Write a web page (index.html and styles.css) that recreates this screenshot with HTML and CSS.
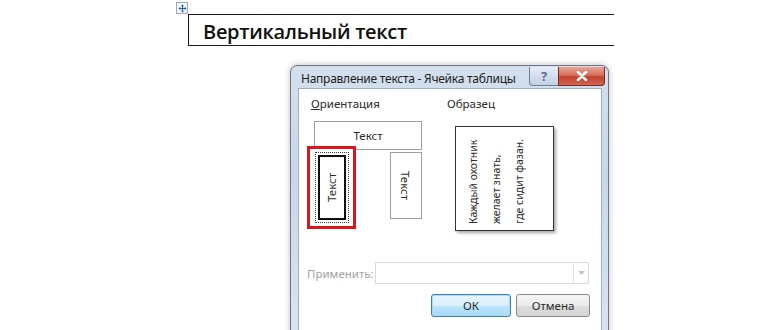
FILE: index.html
```html
<!DOCTYPE html>
<html lang="ru">
<head>
    <meta charset="UTF-8">
    <title>Вертикальный текст</title>
    <link rel="stylesheet" href="styles.css">
</head>
<body>
    <div class="doc">
        <div class="table-cell">
            <span class="move-handle">
                <svg width="9" height="9" viewBox="0 0 9 9">
                    <path d="M4.5 0.5 L2.8 2.3 H4 V4 H2.3 V2.8 L0.5 4.5 L2.3 6.2 V5 H4 V6.7 H2.8 L4.5 8.5 L6.2 6.7 H5 V5 H6.7 V6.2 L8.5 4.5 L6.7 2.8 V4 H5 V2.3 H6.2 Z" fill="#2a5ea8"/>
                </svg>
            </span>
            <div class="cell-text">Вертикальный текст</div>
        </div>

        <div class="dialog">
            <div class="titlebar">
                <span class="title">Направление текста - Ячейка таблицы</span>
                <div class="caption-buttons">
                    <span class="cap-btn help">?</span>
                    <span class="cap-btn close">
                        <svg width="12" height="10" viewBox="0 0 12 10">
                            <path d="M2 1 L10 9 M10 1 L2 9" stroke="#fff" stroke-width="2.6" stroke-linecap="round"/>
                        </svg>
                    </span>
                </div>
            </div>

            <div class="client">
                <div class="groups">
                    <div class="group orientation">
                        <div class="group-label"><u>О</u>риентация</div>
                        <div class="option horizontal">Текст</div>
                        <div class="option-row">
                            <div class="highlight">
                                <div class="focus">
                                    <div class="option vertical selected"><span class="up">Текст</span></div>
                                </div>
                            </div>
                            <div class="option vertical down-box"><span class="down">Текст</span></div>
                        </div>
                    </div>

                    <div class="group sample">
                        <div class="group-label">Образец</div>
                        <div class="sample-box">
                            <div class="sample-text">Каждый охотник<br>желает знать,<br>где сидит фазан.</div>
                        </div>
                    </div>
                </div>

                <div class="apply-row">
                    <span class="apply-label">Применить:</span>
                    <div class="combo">
                        <span class="combo-arrow">
                            <svg width="7" height="4" viewBox="0 0 7 4"><path d="M0 0 H7 L3.5 4 Z" fill="#c4c4c4"/></svg>
                        </span>
                    </div>
                </div>

                <div class="button-row">
                    <button class="btn default">ОК</button>
                    <button class="btn">Отмена</button>
                </div>
            </div>
        </div>
    </div>
</body>
</html>
```

FILE: styles.css
```css
body {
    margin: 0;
    background-color: #ffffff;
    font-family: "Noto Sans", "Open Sans", sans-serif;
    overflow: hidden;
}
.doc {
    display: flex;
    flex-direction: column;
    align-items: flex-start;
    padding-top: 14px;
}
.table-cell {
    position: relative;
    margin-left: 188px;
    width: 425px;
    height: 30px;
    border-top: 1px solid #1a1a1a;
    border-bottom: 1px solid #1a1a1a;
    border-left: 1px solid #1a1a1a;
    display: flex;
    align-items: center;
}
.move-handle {
    position: absolute;
    left: -13px;
    top: -13px;
    width: 10px;
    height: 10px;
    border: 1px solid #9aa9c0;
    background-color: #f4f6fa;
    display: flex;
    align-items: center;
    justify-content: center;
}
.cell-text {
    margin-left: 14px;
    margin-top: 2px;
    font-family: "Open Sans", sans-serif;
    font-weight: 600;
    font-size: 20px;
    letter-spacing: -0.3px;
    color: #111;
}
.dialog {
    margin-left: 290px;
    margin-top: 19px;
    width: 304px;
    height: 270px;
    padding: 0 6px 0 7px;
    border: 1px solid #6b7686;
    border-radius: 7px 7px 0 0;
    background: linear-gradient(to bottom, #d3e0ee 0%, #c8d7e9 40%, #d9e4f1 100%);
    box-shadow: 0 0 6px rgba(0, 0, 0, 0.25);
    display: flex;
    flex-direction: column;
}
.titlebar {
    height: 22px;
    display: flex;
    align-items: flex-start;
    justify-content: space-between;
}
.title {
    margin-top: 4px;
    margin-left: 3px;
    font-size: 12px;
    color: #1c1c1c;
    letter-spacing: -0.25px;
}
.caption-buttons {
    display: flex;
    margin-right: -3px;
    margin-top: 1px;
}
.cap-btn {
    height: 18px;
    display: flex;
    align-items: center;
    justify-content: center;
    border: 1px solid #6f7f94;
    border-top: none;
}
.help {
    width: 28px;
    border-radius: 0 0 0 4px;
    border-right: none;
    background: linear-gradient(to bottom, #e6eef7 0%, #d2deec 50%, #c3d2e4 100%);
    color: #5b6f8a;
    font-size: 13px;
    font-weight: 700;
}
.close {
    width: 45px;
    border-radius: 0 0 4px 0;
    border-color: #7a2c22;
    background: linear-gradient(to bottom, #eaa595 0%, #d7705d 45%, #c2412c 55%, #d3664f 100%);
}
.client {
    flex: 1;
    background-color: #ffffff;
    border: 1px solid #9eb0c6;
    border-bottom: none;
    display: flex;
    flex-direction: column;
    font-size: 11.5px;
    color: #2a2a2a;
}
.groups {
    display: flex;
    height: 166px;
}
.group-label {
    margin-top: 7px;
    height: 18px;
}
.orientation {
    width: 136px;
    padding-left: 12px;
}
.option {
    background-color: #ffffff;
    border: 1px solid #a0a0a0;
    display: flex;
    align-items: center;
    justify-content: center;
}
.horizontal {
    margin-left: 3px;
    margin-top: 7px;
    width: 106px;
    height: 27px;
}
.option-row {
    display: flex;
    align-items: flex-start;
    margin-top: -4px;
}
.highlight {
    width: 43px;
    height: 77px;
    margin-left: -4px;
    border: 3px solid #e0131b;
    background-color: #ffffff;
    display: flex;
    align-items: center;
    justify-content: center;
}
.focus {
    width: 32px;
    height: 69px;
    border: 1px dotted #333;
    display: flex;
    align-items: center;
    justify-content: center;
}
.vertical {
    overflow: hidden;
}
.selected {
    width: 24px;
    height: 61px;
    border: 2px solid #111;
}
.down-box {
    margin-left: 34px;
    margin-top: 6px;
    width: 30px;
    height: 65px;
}
.up {
    transform: rotate(-90deg);
    white-space: nowrap;
}
.down {
    transform: rotate(90deg);
    white-space: nowrap;
}
.sample-box {
    margin-left: 8px;
    margin-top: 12px;
    width: 97px;
    height: 103px;
    border: 1px solid #333;
    background-color: #fff;
    box-shadow: 2px 2px 3px rgba(0, 0, 0, 0.35);
    display: flex;
    justify-content: flex-start;
}
.sample-text {
    writing-mode: vertical-rl;
    transform: rotate(180deg);
    margin: 4px 0 6px 6px;
    width: 68px;
    font-size: 10.5px;
    line-height: 23px;
    white-space: nowrap;
    text-align: start;
}
.apply-row {
    display: flex;
    align-items: center;
    margin-top: 7px;
    padding-left: 8px;
    height: 22px;
}
.apply-label {
    color: #a3a3a3;
    width: 68px;
}
.combo {
    width: 212px;
    height: 20px;
    border: 1px solid #d9d9d9;
    display: flex;
    justify-content: flex-end;
}
.combo-arrow {
    width: 14px;
    border-left: 1px solid #e4e4e4;
    display: flex;
    align-items: center;
    justify-content: center;
}
.button-row {
    display: flex;
    justify-content: flex-end;
    gap: 5px;
    margin-top: 10px;
    padding-right: 11px;
}
.btn {
    height: 23px;
    font-family: "Noto Sans", "Open Sans", sans-serif;
    font-size: 11.5px;
    color: #2a2a2a;
    border: 1px solid #8a8a8a;
    border-radius: 3px;
    background: linear-gradient(to bottom, #f6f6f6 0%, #ebebeb 50%, #dddddd 51%, #d6d6d6 100%);
    padding: 0;
    width: 74px;
}
.default {
    width: 80px;
    border-color: #3c7fb1;
    background: linear-gradient(to bottom, #eaf6fd 0%, #d9f0fc 50%, #bee6fd 51%, #a7d9f5 100%);
    box-shadow: inset 0 0 0 1px #a9dcf6;
}
```
